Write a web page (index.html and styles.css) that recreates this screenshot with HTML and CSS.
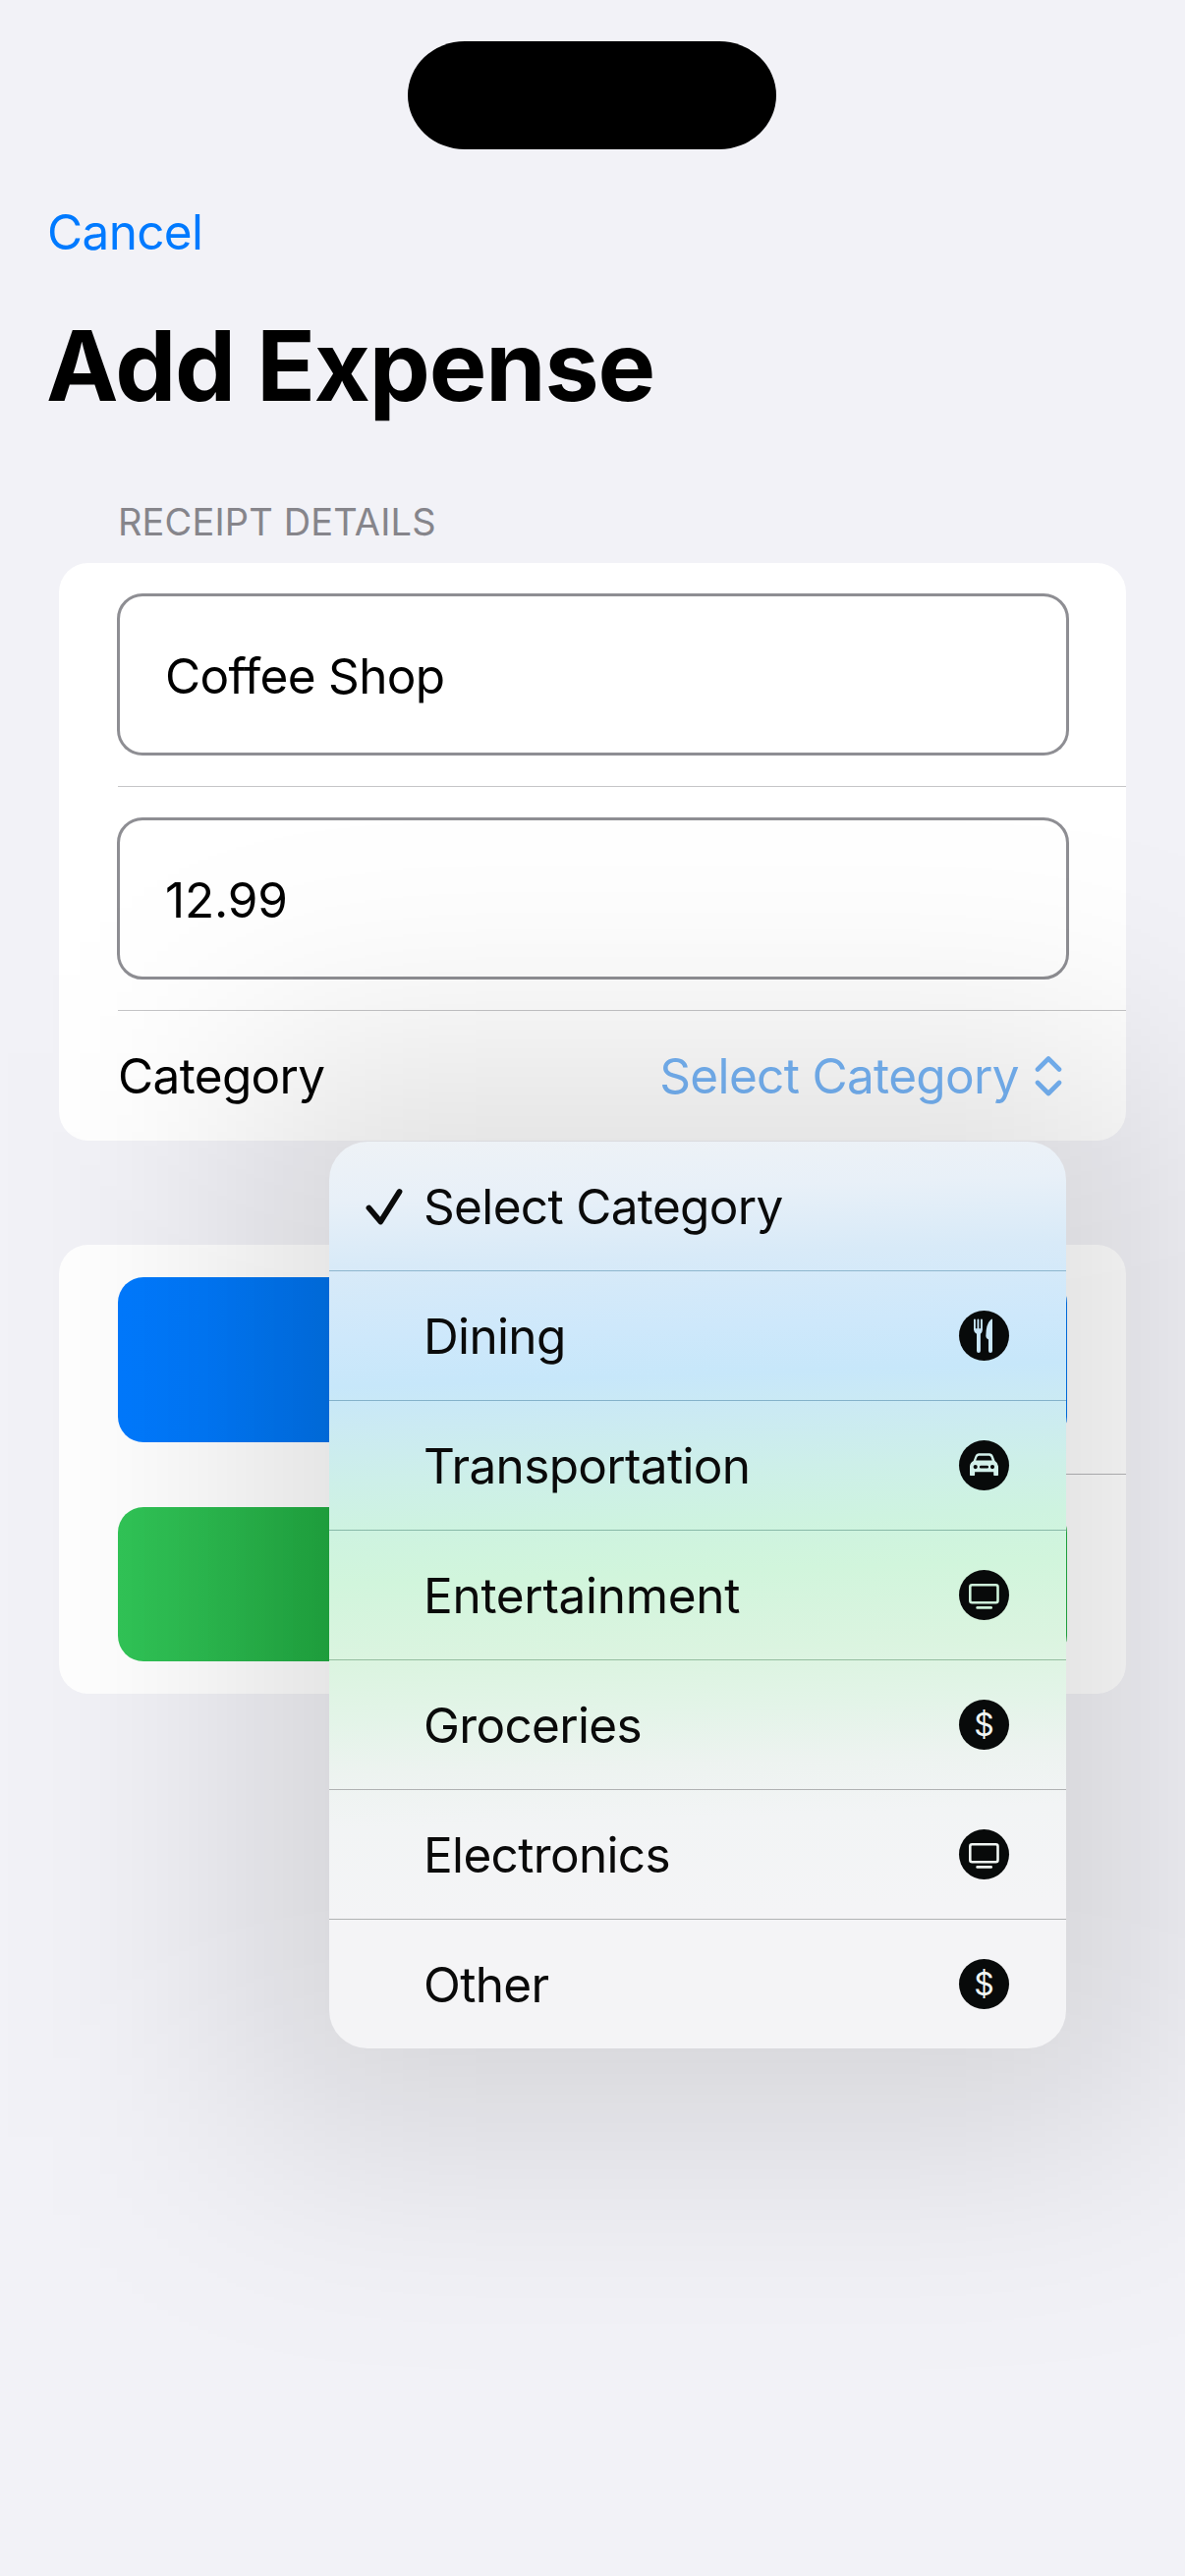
FILE: index.html
```html
<!DOCTYPE html>
<html lang="en">
<head>
<meta charset="utf-8">
<title>Add Expense</title>
<link rel="stylesheet" href="styles.css">
</head>
<body>
<svg class="defs" width="0" height="0" aria-hidden="true">
  <symbol id="dining" viewBox="0 0 51 51">
    <path d="M15 9.500a.9.900 0 0 1 1.900 0v8.800h1.600V9.500a.9.900 0 0 1 1.900 0v8.800h1.600V9.500a.9.900 0 0 1 1.900 0v10q0 2.200-2 4.200V41a1.900 1.900 0 0 1-3.900 0V23.700q-3-2-3-4.200zM34 9.500V41a1.900 1.900 0 0 1-4 0V29.500q-2.700-1.300-2.700-3.500 0-12.500 5.300-17.100 1.400-.8 1.400.6z"/>
  </symbol>
  <symbol id="car" viewBox="0 0 51 51">
    <path fill-rule="evenodd" d="M20 13.300h11.300q2.500.1 3.300 2.400l2 5.400q3.100 1.900 3.400 5.400v8.400q0 1.200-1.200 1.200h-2.300q-1.300 0-1.300-1.200v-2.600H16.100v2.600q0 1.200-1.300 1.200h-2.600q-1.200 0-1.200-1.200v-8.400q.3-3.500 3.600-5.400l2-5.400q.8-2.300 3.400-2.400zM20.300 15.700q-1.300.1-1.800 1.400l-1.300 3.400h16.500l-1.300-3.400q-.5-1.300-1.800-1.400zM16.700 25a2.100 2.100 0 1 0 0 4.200 2.100 2.100 0 0 0 0-4.200zM34 25a2.100 2.100 0 1 0 0 4.200 2.100 2.100 0 0 0 0-4.200zM22.200 25.800a1.200 1.200 0 0 0 0 2.700h6.500a1.200 1.200 0 0 0 0-2.700z"/>
  </symbol>
  <symbol id="tv" viewBox="0 0 51 51">
    <rect x="11.300" y="15.300" width="28.200" height="18" rx="2" fill="none" stroke="currentColor" stroke-width="2.600"/>
    <rect x="17.300" y="37.100" width="16.700" height="2.700" rx="1.300"/>
  </symbol>
</svg>
<div class="screen">
  <div class="status"><div class="island"></div></div>
  <nav class="nav"><a class="cancel">Cancel</a></nav>
  <h1 class="title">Add Expense</h1>
  <h2 class="label">RECEIPT DETAILS</h2>

  <section class="card details">
    <div class="row"><div class="field merchant">Coffee Shop</div></div>
    <div class="row"><div class="field amount">12.99</div></div>
    <div class="category">
      <span class="name">Category</span>
      <span class="value">Select Category</span>
      <svg class="chevrons" viewBox="0 0 28 42"><path d="M3 14.500L14 3.500 25 14.500M3 28L14 39 25 28"/></svg>
    </div>
  </section>

  <section class="card actions">
    <div class="button primary"></div>
    <div class="rule"></div>
    <div class="button confirm"></div>
  </section>

  <div class="shade"></div>
  <ul class="menu">
    <li class="item selected"><svg class="check" viewBox="0 0 38 38"><path d="M3.500 20.500L15.300 34.500 34.500 4"/></svg><span class="text">Select Category</span></li>
    <li class="item"><span class="text">Dining</span><svg class="icon"><use href="#dining"/></svg></li>
    <li class="item"><span class="text">Transportation</span><svg class="icon"><use href="#car"/></svg></li>
    <li class="item"><span class="text">Entertainment</span><svg class="icon"><use href="#tv"/></svg></li>
    <li class="item"><span class="text">Groceries</span><span class="icon coin">$</span></li>
    <li class="item"><span class="text">Electronics</span><svg class="icon"><use href="#tv"/></svg></li>
    <li class="item"><span class="text">Other</span><span class="icon coin">$</span></li>
  </ul>
</div>
</body>
</html>
```
FILE: styles.css
```css
* { box-sizing: border-box; }
body {
  margin: 0;
  background: #f2f2f7;
  color: #000;
  font-family: Inter, "Liberation Sans", sans-serif;
  font-size: 49.5px;
  letter-spacing: -0.66px;
  line-height: 60px;
}
.defs { position: absolute; }
.screen {
  position: relative;
  width: 1206px;
  height: 2622px;
  overflow: hidden;
}
.status { height: 177px; padding-top: 42px; }
.island {
  width: 375px;
  height: 110px;
  margin-left: 415px;
  border-radius: 58px / 55px;
  background: #000;
}
.nav { height: 132px; padding: 29px 48px 0; }
.cancel { color: #007aff; }
.title {
  height: 193px;
  margin: 0;
  padding: 4px 47px 0;
  font-size: 98.5px;
  font-weight: 700;
  letter-spacing: -1.15px;
  line-height: 120px;
}
.label {
  height: 71px;
  margin: 0;
  padding-left: 120px;
  color: #86858b;
  font-size: 38px;
  font-weight: 400;
  letter-spacing: 0.15px;
  line-height: 58px;
}
.card {
  width: 1086px;
  margin-left: 60px;
  border-radius: 30px;
  background: #fff;
}
.details { height: 588px; padding-left: 60px; }
.row {
  height: 228px;
  padding-top: 31px;
  border-bottom: 1px solid #c6c6c8;
}
.field {
  width: 969px;
  height: 165px;
  margin-left: -1px;
  padding: 51px 0 0 46px;
  border: 3px solid #8e8e93;
  border-radius: 26px;
}
.amount { letter-spacing: -0.2px; }
.category {
  display: flex;
  align-items: center;
  height: 132px;
  padding-right: 65px;
}
.name { flex: 1; }
.value { color: #76b4f6; }
.chevrons { width: 28px; height: 42px; margin-left: 16px; }
.chevrons path {
  fill: none;
  stroke: #76b4f6;
  stroke-width: 4.6;
  stroke-linecap: round;
  stroke-linejoin: round;
}
.actions {
  height: 457px;
  margin-top: 106px;
  padding: 33px 0 0 60px;
}
.button { width: 966px; border-radius: 26px; }
.primary { height: 168px; background: linear-gradient(90deg, #007aff 0, #0079fb 90px, #0074ee 215px); }
.rule { height: 1px; margin: 32px 0 33px 500px; background: #b8b8ba; }
.confirm { height: 157px; background: linear-gradient(90deg, #31c557 0, #2cbc50 90px, #22ae43 215px); }

.shade {
  position: absolute;
  left: 245px;
  top: 1072px;
  width: 930px;
  height: 1103px;
  background: rgba(0, 0, 0, .125);
  filter: blur(120px);
}
.menu {
  position: absolute;
  left: 335px;
  top: 1162px;
  width: 750px;
  height: 923px;
  margin: 0;
  padding: 0;
  list-style: none;
  color: #0a0a0a;
  border-radius: 39px;
  background: linear-gradient(178deg, #eef2f6 0, #e8f0f8 60px, #d8eaf8 128px, #cee8fb 200px, #c7e7fa 250px, #cbeaf3 290px, #cdefe9 345px, #cef3e0 400px, #d1f5dc 450px, #dbf4e0 530px, #e3f4e8 590px, #edf3f0 645px, #f2f4f5 700px, #f4f4f6 800px);
}
.item {
  display: flex;
  align-items: center;
  height: 132px;
  padding: 0 58px 0 96px;
  border-bottom: 1px solid #b0b2b3;
}
.item:nth-child(1) { padding-left: 37px; border-color: #8db6cd; }
.item:nth-child(2) { border-color: #84b2ca; }
.item:nth-child(3) { border-color: #88b9a8; }
.item:nth-child(4) { letter-spacing: -0.3px; border-color: #94bd9f; }
.item:last-child { height: 131px; border: 0; }
.text { flex: 1; }
.check { width: 38px; height: 38px; margin-right: 21px; }
.check path {
  fill: none;
  stroke: #0a0a0a;
  stroke-width: 5.8;
  stroke-linecap: round;
  stroke-linejoin: round;
}
.icon {
  width: 51px;
  height: 51px;
  border-radius: 50%;
  background: #080a0a;
  color: #d2f0ea;
  fill: currentColor;
}
.item:nth-child(2) .icon { color: #c8e6f8; }
.item:nth-child(4) .icon { color: #cdf2da; }
.item:nth-child(n+5) .icon { color: #eff5f2; }
.coin {
  font-size: 32px;
  letter-spacing: 0;
  line-height: 51px;
  text-align: center;
}
```
